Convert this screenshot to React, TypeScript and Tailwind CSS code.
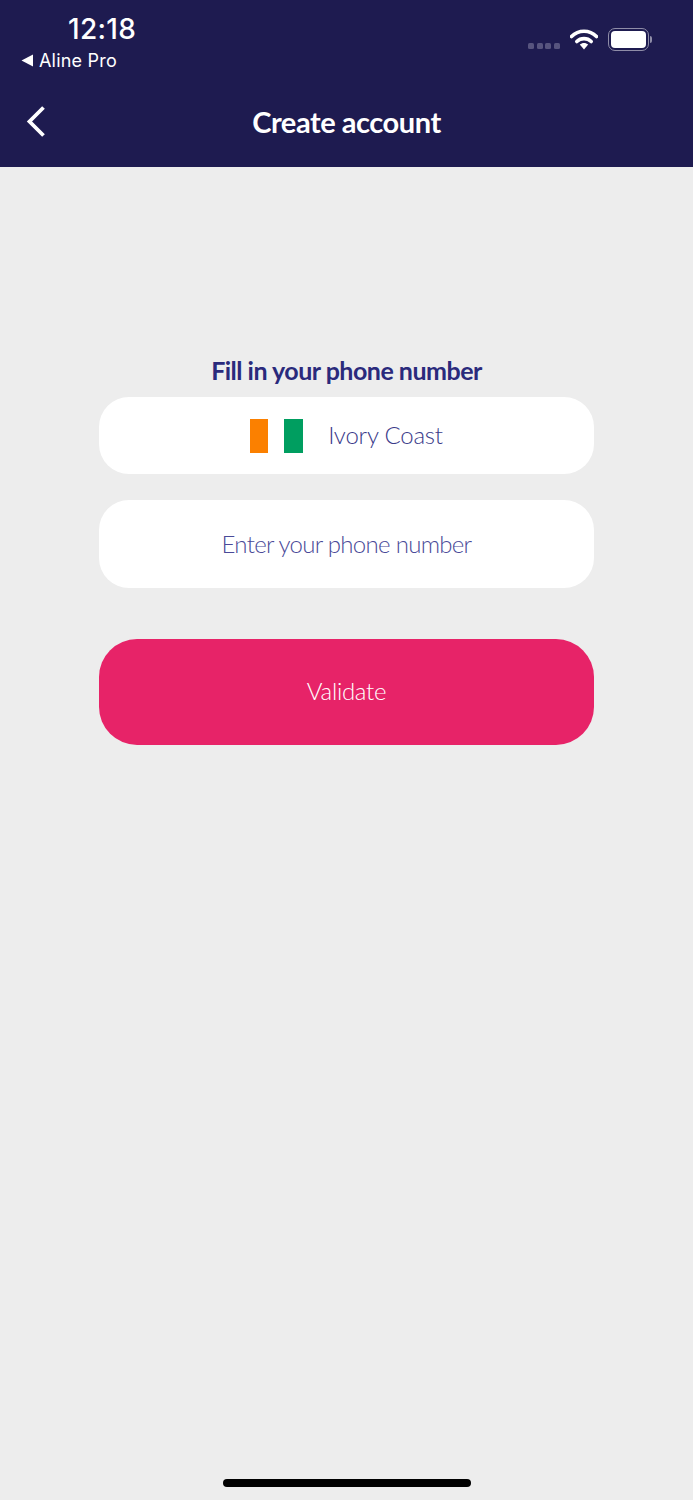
export default function App() {
  return (
    <div className="flex h-[1500px] w-[693px] flex-col overflow-hidden bg-[#ededed] font-['Lato',sans-serif]">
      <header className="flex h-[167px] shrink-0 flex-col bg-[#1e1b50] text-white">
        <div className="flex h-[76px] shrink-0">
          <div className="flex w-[130px] shrink-0 flex-col">
            <div className="mt-[12px] ml-[68px] h-[34px] font-['Inter',sans-serif] text-[28px] leading-[34px] font-medium tracking-[0.3px] whitespace-nowrap">12:18</div>
            <div className="mt-[3px] ml-[21px] flex h-[23px] items-center gap-[6px]">
              <svg width="12" height="13" viewBox="0 0 12 13" className="shrink-0"><path d="M12 0.5V12.5L0.5 6.5Z" fill="#fff" /></svg>
              <span className="font-['Inter',sans-serif] text-[18px] leading-[23px] tracking-[0.2px] whitespace-nowrap">Aline Pro</span>
            </div>
          </div>
          <div className="ml-auto mt-[28px] mr-[41px] flex h-[24px] items-start">
            <div className="mt-[15px] flex gap-[2.67px]">
              <span className="h-[6px] w-[6px] rounded-[1.5px] bg-[#57547e]" />
              <span className="h-[6px] w-[6px] rounded-[1.5px] bg-[#57547e]" />
              <span className="h-[6px] w-[6px] rounded-[1.5px] bg-[#57547e]" />
              <span className="h-[6px] w-[6px] rounded-[1.5px] bg-[#57547e]" />
            </div>
            <svg width="28" height="22" viewBox="0 0 28 22" className="ml-[10px] shrink-0">
              <path d="M1.5 8.5C8.5 1.5 19.5 1.5 26.5 8.5" fill="none" stroke="#fff" strokeWidth="3.6" strokeLinecap="round" />
              <path d="M6.8 13.5C10.8 9.6 17.2 9.6 21.2 13.5" fill="none" stroke="#fff" strokeWidth="3.6" strokeLinecap="round" />
              <path d="M9.8 16.6C12.2 14.3 15.8 14.3 18.2 16.6L14 21.5Z" fill="#fff" />
            </svg>
            <div className="ml-[10px] flex items-center">
              <div className="flex h-[23px] w-[41px] items-center justify-center rounded-[7px] border-[1.5px] border-[#8f8da8] p-[2px]">
                <div className="h-full w-full rounded-[4px] bg-white" />
              </div>
              <div className="ml-[1px] h-[7px] w-[2px] rounded-r-[2px] bg-[#8f8da8]" />
            </div>
          </div>
        </div>
        <div className="relative flex h-[91px] items-start justify-center">
          <svg width="20" height="33" viewBox="0 0 20 33" className="absolute top-[29px] left-[26px]">
            <path d="M17.5 2.5L3.5 16.5L17.5 30.5" fill="none" stroke="#fff" strokeWidth="3.8" />
          </svg>
          <h1 className="mt-[29px] text-[29px] leading-[34px] font-bold tracking-[-0.45px] whitespace-nowrap">Create account</h1>
        </div>
      </header>

      <main className="flex flex-1 flex-col items-center px-[99px] pt-[186px]">
        <p className="h-[44px] text-[25px] leading-[34px] font-bold tracking-[-0.5px] whitespace-nowrap text-[#2a2a7c]">Fill in your phone number</p>
        <div className="flex h-[77px] w-full items-center justify-center rounded-[30px] bg-white">
          <div className="flex h-[34px] w-[53px] shrink-0">
            <span className="w-[18px] bg-[#fb8000]" />
            <span className="w-[16px] bg-white" />
            <span className="w-[19px] bg-[#009e60]" />
          </div>
          <span className="mb-[2px] ml-[25px] text-[24px] leading-[34px] font-light tracking-[-0.2px] whitespace-nowrap text-[#3b3b8a]">Ivory Coast</span>
        </div>
        <div className="mt-[26px] flex h-[88px] w-full items-center justify-center rounded-[30px] bg-white text-[24px] font-light tracking-[-0.7px] whitespace-nowrap text-[#4a4a98]">
          Enter your phone number
        </div>
        <button className="mt-[51px] flex h-[106px] w-full items-center justify-center rounded-[38px] bg-[#e72368] pb-[2px] text-[24px] font-light tracking-[-0.3px] text-white">
          Validate
        </button>
      </main>

      <div className="flex h-[21px] shrink-0 justify-center">
        <div className="h-[8px] w-[248px] rounded-full bg-black" />
      </div>
    </div>
  );
}
